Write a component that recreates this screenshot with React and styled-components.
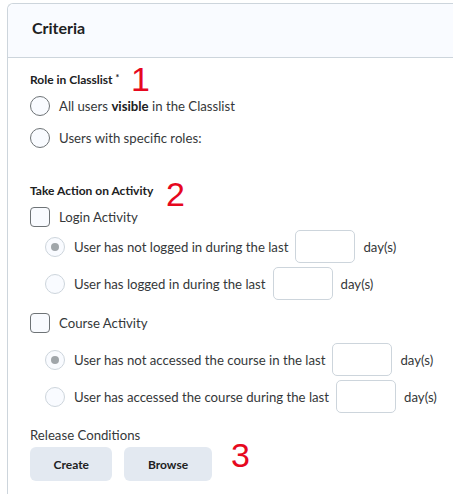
import styled, { createGlobalStyle } from "styled-components";

const GlobalStyle = createGlobalStyle`
  html, body {
    margin: 0;
    padding: 0;
    background: #ffffff;
    overflow: hidden;
  }
  body {
    font-family: Lato, "Noto Sans", sans-serif;
    color: #494c4e;
  }
`;

// Página
const Page = styled.div`
  padding: 3px 0 0 7px;
  height: 491px;
  overflow: hidden;
`;

// Painel de critérios
const Panel = styled.section`
  width: calc(100% + 8px);
  min-height: 520px;
  border: 1px solid #cdd5dc;
  border-right: none;
  border-bottom: none;
  border-top-left-radius: 6px;
  box-sizing: border-box;
`;

const PanelHeader = styled.header`
  display: flex;
  align-items: center;
  height: 54px;
  padding: 0 0 6px 24px;
  box-sizing: border-box;
  background: #f9fbff;
  border-bottom: 1px solid #cdd5dc;
  border-top-left-radius: 6px;
  font-size: 16px;
  font-weight: 700;
  line-height: 20px;
  color: #202122;
`;

const PanelBody = styled.div`
  display: flex;
  flex-direction: column;
  padding: 14px 22px 0 22px;
`;

// Rótulo de seção
const SectionLabel = styled.div`
  position: relative;
  margin-top: ${(p) => p.$top || 0}px;
  font-size: 12px;
  font-weight: 700;
  line-height: 16px;
  color: #202122;
`;

const Required = styled.span`
  margin-left: 3px;
  font-size: 9px;
  vertical-align: top;
  line-height: 12px;
`;

// Número vermelho de anotação
const Marker = styled.span`
  position: absolute;
  left: ${(p) => p.$left}px;
  top: ${(p) => p.$top}px;
  font-family: "Liberation Sans", Arial, sans-serif;
  font-size: 34px;
  font-weight: 400;
  line-height: 34px;
  color: #e6081e;
`;

const Row = styled.label`
  display: flex;
  align-items: center;
  gap: 9px;
  margin-top: ${(p) => p.$top || 0}px;
  padding-left: ${(p) => (p.$indent ? 15 : 0)}px;
  height: ${(p) => p.$height || 20}px;
  font-size: 13.2px;
  line-height: 20px;
  color: #35383a;
  white-space: nowrap;

  b {
    font-weight: 700;
    color: #202122;
  }
`;

const Radio = styled.span`
  flex: none;
  display: flex;
  align-items: center;
  justify-content: center;
  width: 20px;
  height: 20px;
  box-sizing: border-box;
  border-radius: 50%;
  border: 1px solid ${(p) => (p.$disabled ? "#cdd5dc" : "#6e7376")};
  background: #f9fbff;

  &::after {
    content: "";
    display: ${(p) => (p.$checked ? "block" : "none")};
    width: 8px;
    height: 8px;
    border-radius: 50%;
    background: #a0a6aa;
  }
`;

const Checkbox = styled.span`
  flex: none;
  width: 20px;
  height: 20px;
  box-sizing: border-box;
  border-radius: 4px;
  border: 1px solid #6e7376;
  background: #f9fbff;
`;

const DaysInput = styled.input`
  width: 60px;
  height: 33px;
  box-sizing: border-box;
  margin: 0 -2px 0 -2px;
  border: 1px solid #cdd5dc;
  border-radius: 5px;
  background: #ffffff;
  font-family: inherit;
`;

const Days = styled.span`
  margin-left: 1px;
`;

const ReleaseLabel = styled.div`
  margin-top: 12px;
  font-size: 13.2px;
  line-height: 20px;
  color: #35383a;
`;

const ButtonRow = styled.div`
  position: relative;
  display: flex;
  gap: 12px;
  margin-top: 2px;
`;

const Button = styled.button`
  height: 34px;
  padding: 0 23.5px;
  border: none;
  border-radius: 6px;
  background: #e3e9f1;
  font-family: Lato, "Noto Sans", sans-serif;
  font-size: 12px;
  font-weight: 700;
  color: #202122;
  cursor: pointer;
`;

function DaysRow({ top, label, checked }) {
  return (
    <Row $indent $top={top} $height={33}>
      <Radio $disabled $checked={checked} />
      <span>{label}</span>
      <DaysInput type="text" />
      <Days>day(s)</Days>
    </Row>
  );
}

export default function App() {
  return (
    <>
      <GlobalStyle />
      <Page>
        <Panel>
          <PanelHeader>Criteria</PanelHeader>
          <PanelBody>
            <SectionLabel>
              Role in Classlist<Required>*</Required>
              <Marker $left={101} $top={-10}>1</Marker>
            </SectionLabel>
            <Row $top={8}>
              <Radio />
              <span>
                All users <b>visible</b> in the Classlist
              </span>
            </Row>
            <Row $top={12}>
              <Radio />
              <span>Users with specific roles:</span>
            </Row>

            <SectionLabel $top={35}>
              Take Action on Activity
              <Marker $left={136} $top={-6}>2</Marker>
            </SectionLabel>
            <Row $top={8}>
              <Checkbox />
              <span>Login Activity</span>
            </Row>
            <DaysRow top={3} checked label="User has not logged in during the last" />
            <DaysRow top={4} label="User has logged in during the last" />

            <Row $top={13}>
              <Checkbox />
              <span>Course Activity</span>
            </Row>
            <DaysRow top={10} checked label="User has not accessed the course in the last" />
            <DaysRow top={4} label="User has accessed the course during the last" />

            <ReleaseLabel>Release Conditions</ReleaseLabel>
            <ButtonRow>
              <Button type="button">Create</Button>
              <Button type="button">Browse</Button>
              <Marker $left={201} $top={-9}>3</Marker>
            </ButtonRow>
          </PanelBody>
        </Panel>
      </Page>
    </>
  );
}
